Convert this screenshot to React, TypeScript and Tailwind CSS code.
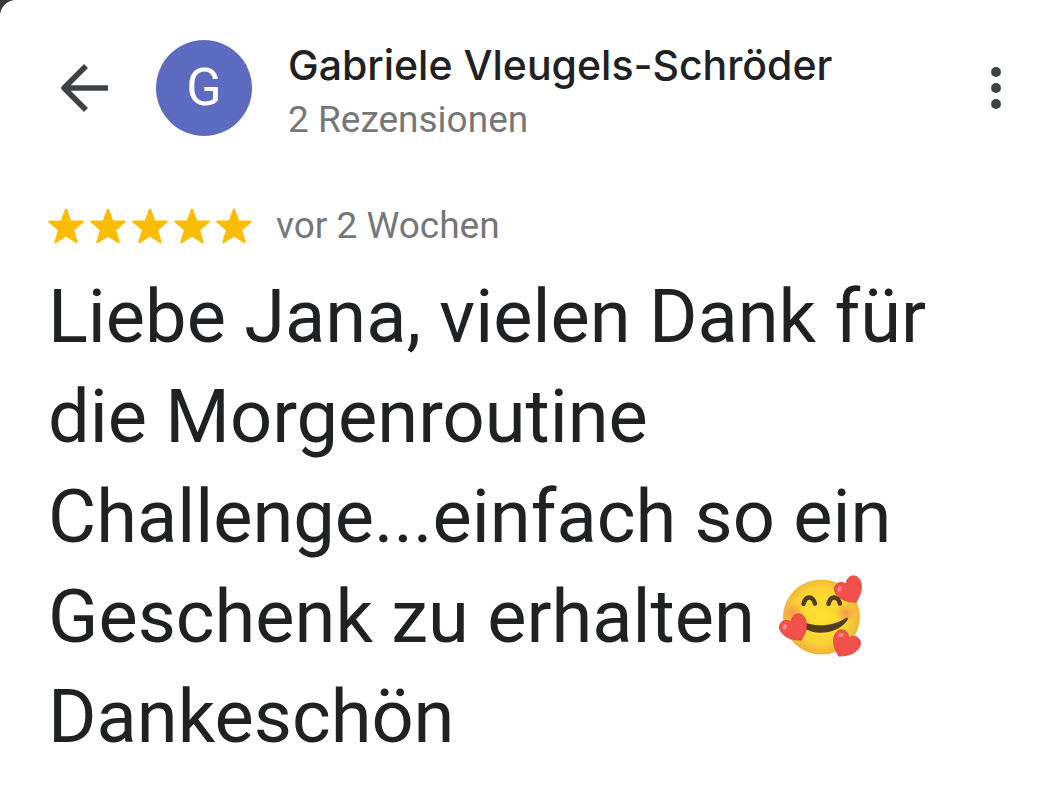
const STAR_COUNT = 5;

function BackIcon() {
  return (
    <svg viewBox="0 0 48 48" className="size-12" fill="none" stroke="#3f4244" strokeWidth="5.600" aria-hidden="true">
      <path d="M48 24H5M26 2 4 24l22 22" strokeLinejoin="round" />
    </svg>
  );
}

function MoreIcon() {
  return (
    <svg viewBox="0 0 10 44" className="h-11 w-2.5" fill="#3f4244" aria-hidden="true">
      <circle cx="5" cy="6" r="5" />
      <circle cx="5" cy="22" r="5" />
      <circle cx="5" cy="38" r="5" />
    </svg>
  );
}

function Star() {
  return (
    <svg viewBox="0 0 36 36" className="size-9" fill="#fbbc04" stroke="#fbbc04" strokeWidth="2.400" strokeLinejoin="round" aria-hidden="true">
      <path d="M18 2l4.300 11.700h12.200l-9.700 8.100 3.700 12.200L18 27.200 7.500 34l3.700-12.200-9.700-8.100h12.200z" />
    </svg>
  );
}

function Heart({ transform }: { transform: string }) {
  return (
    <g transform={transform}>
      <path d="M0 14.500C-9 9.500-14.500 3-14.500-4C-14.500-13-4-15 0-7C4-15 14.500-13 14.500-4C14.500 3 9 9.500 0 14.500z" fill="#f2504b" stroke="#df4040" strokeWidth="0.800" />
      <ellipse cx="-8.500" cy="-6" rx="3" ry="2" transform="rotate(-35 -8.500 -6)" fill="#ff8c84" />
    </g>
  );
}

function SmilingFaceWithHearts() {
  return (
    <svg viewBox="0 0 86 86" className="ml-1.5 inline-block size-[86px] overflow-visible align-[-19px]" role="img" aria-label="🥰">
      <defs>
        <radialGradient id="face" cx="50%" cy="48%" r="52%">
          <stop offset="0" stopColor="#fee12f" />
          <stop offset="0.700" stopColor="#fbd334" />
          <stop offset="1" stopColor="#eeb03c" />
        </radialGradient>
        <radialGradient id="blush">
          <stop offset="0" stopColor="#f47c54" stopOpacity="0.650" />
          <stop offset="1" stopColor="#f47c54" stopOpacity="0" />
        </radialGradient>
      </defs>
      <ellipse cx="42.500" cy="42" rx="38.500" ry="37.500" fill="url(#face)" />
      <circle cx="14" cy="38" r="11" fill="url(#blush)" />
      <circle cx="67" cy="38" r="11" fill="url(#blush)" />
      <g fill="none" stroke="#513c20" strokeWidth="4.500" strokeLinecap="round">
        <path d="M24.500 29c2-8.500 9-8.500 11.500-0.500" />
        <path d="M49.500 29c2-8.500 9-8.500 11.500-0.500" />
      </g>
      <path d="M27 48c14 4 27 3 40-5 1.500-1 2.500 0 1.500 2-8 13-31 16-42 9z" fill="#513c20" />
      <Heart transform="translate(70.500 15) rotate(-28) scale(0.950)" />
      <Heart transform="translate(15.500 53) rotate(-28) scale(0.950)" />
      <Heart transform="translate(66.500 69) rotate(28) scale(0.950)" />
    </svg>
  );
}

export default function App() {
  return (
    <div className="bg-[#3a3a3c]">
      <main className="min-h-screen rounded-tl-2xl bg-white px-12 pt-10 pb-8 font-['Roboto',sans-serif] text-[#202124]">
        <header className="flex items-start">
          <button type="button" aria-label="Zurück" className="ml-3 flex h-24 items-center">
            <BackIcon />
          </button>
          <div className="ml-12 flex size-24 shrink-0 items-center justify-center rounded-full bg-[#5c6bc0] text-[52px] text-white">
            G
          </div>
          <div className="ml-9 min-w-0 flex-1">
            <h1 className="font-['Inter',sans-serif] text-[41px] leading-[50px] font-medium">Gabriele Vleugels-Schröder</h1>
            <p className="text-[37px] leading-[60px] text-[#757779]">2 Rezensionen</p>
          </div>
          <button type="button" aria-label="Weitere Optionen" className="mr-3 flex h-24 items-center">
            <MoreIcon />
          </button>
        </header>
        <div className="mt-[50px] flex items-center gap-6">
          <div role="img" aria-label="5 von 5 Sternen" className="flex gap-1.5">
            {Array.from({ length: STAR_COUNT }, (_, i) => (
              <Star key={i} />
            ))}
          </div>
          <time className="text-[37px] leading-[52px] text-[#757779]">vor 2 Wochen</time>
        </div>
        <p className="mt-[15px] text-[74px] leading-[100px] text-[#202122]">
          Liebe Jana, vielen Dank für
          <br />
          die Morgenroutine
          <br />
          Challenge...einfach so ein
          <br />
          Geschenk zu erhalten <SmilingFaceWithHearts />
          <br />
          Dankeschön
        </p>
      </main>
    </div>
  );
}
